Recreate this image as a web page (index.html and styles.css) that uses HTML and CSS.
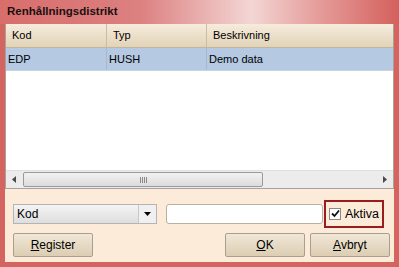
FILE: index.html
```html
<!DOCTYPE html>
<html lang="sv">
  <head>
    <meta charset="UTF-8" />
    <title>Renhållningsdistrikt</title>
    <link rel="stylesheet" href="styles.css">
  </head>
  <body>
    <div class="window">
      <div class="titlebar">Renhållningsdistrikt</div>

      <div class="content">
        <!-- lista -->
        <div class="grid">
          <div class="row head">
            <div class="cell c1">Kod</div>
            <div class="cell c2">Typ</div>
            <div class="cell c3">Beskrivning</div>
          </div>
          <div class="row selected">
            <div class="cell c1">EDP</div>
            <div class="cell c2">HUSH</div>
            <div class="cell c3">Demo data</div>
          </div>
          <div class="empty"></div>
          <div class="hscroll">
            <div class="arrow">
              <svg width="5" height="7" viewBox="0 0 5 7"><path d="M4 0 L0 3.5 L4 7 Z" fill="#4a4a4a"/></svg>
            </div>
            <div class="track">
              <div class="thumb"><span class="grip"></span></div>
            </div>
            <div class="arrow">
              <svg width="5" height="7" viewBox="0 0 5 7"><path d="M1 0 L5 3.5 L1 7 Z" fill="#4a4a4a"/></svg>
            </div>
          </div>
        </div>

        <!-- filter -->
        <div class="filter">
          <div class="combo">
            <span class="combo-text">Kod</span>
            <span class="combo-btn">
              <svg width="7" height="4" viewBox="0 0 7 4"><path d="M0 0 H7 L3.5 4 Z" fill="#000"/></svg>
            </span>
          </div>
          <input type="text" class="search" />
          <label class="check">
            <span class="box">
              <svg width="9" height="9" viewBox="0 0 9 9"><path d="M1 4.5 L3.5 7 L8 1.5" fill="none" stroke="#111" stroke-width="1.8"/></svg>
            </span>
            Aktiva
          </label>
        </div>

        <!-- knappar -->
        <div class="buttons">
          <button class="btn"><u>R</u>egister</button>
          <div class="right">
            <button class="btn"><u>O</u>K</button>
            <button class="btn"><u>A</u>vbryt</button>
          </div>
        </div>
      </div>
    </div>
  </body>
</html>
```

FILE: styles.css
```css
body {
  margin: 0;
  font-family: "Liberation Sans", Arial, sans-serif;
  font-size: 11px;
  color: #000;
}
.window {
  width: 399px;
  height: 267px;
  box-sizing: border-box;
  background-color: #d4645f;
  display: flex;
  flex-direction: column;
}
.titlebar {
  height: 24px;
  line-height: 23px;
  padding-left: 7px;
  font-weight: bold;
  font-size: 11.5px;
  color: #1a1010;
  background: linear-gradient(to right, #d86e6c 0%, #dc8080 35%, #f3d6d4 63%, #e59c9a 80%, #d4605c 100%);
}
.content {
  flex: 1;
  margin: 0 5px 5px 5px;
  background-color: #fcebd8;
  display: flex;
  flex-direction: column;
}
.grid {
  height: 165px;
  box-sizing: border-box;
  border: 1px solid #a8a29a;
  border-top: none;
  background-color: #fff;
  display: flex;
  flex-direction: column;
}
.row {
  display: flex;
  height: 23px;
}
.cell {
  box-sizing: border-box;
  padding-left: 2px;
  line-height: 22px;
  border-right: 1px solid #c6c0b6;
}
.c1 {
  width: 101px;
}
.c2 {
  width: 100px;
}
.c3 {
  flex: 1;
  border-right: none;
}
.head {
  background: linear-gradient(to bottom, #f6ecdc, #e2d3b8);
  border-bottom: 1px solid #c2b59d;
  height: 23px;
}
.head .cell {
  padding-left: 6px;
  border-right-color: #cbbda3;
}
.selected {
  background-color: #b5c9e2;
  border-bottom: 1px solid #c7d4e2;
  height: 22px;
}
.selected .cell {
  border-right-color: #a8b8cc;
}
.empty {
  flex: 1;
}
.hscroll {
  height: 17px;
  display: flex;
  background-color: #ececec;
  border-top: 1px solid #e0e0e0;
}
.arrow {
  width: 17px;
  display: flex;
  align-items: center;
  justify-content: center;
}
.track {
  flex: 1;
  padding: 1px 0;
}
.thumb {
  width: 240px;
  height: 15px;
  box-sizing: border-box;
  border: 1px solid #9a9a9a;
  border-radius: 2px;
  background: linear-gradient(to bottom, #f2f2f2, #dcdcdc);
  display: flex;
  align-items: center;
  justify-content: center;
}
.grip {
  width: 7px;
  height: 6px;
  background: repeating-linear-gradient(to right, #8a8a8a 0 1px, transparent 1px 2px);
}
.filter {
  display: flex;
  align-items: center;
  margin-top: 11px;
  padding-left: 8px;
  height: 27px;
}
.combo {
  width: 144px;
  height: 20px;
  box-sizing: border-box;
  border: 1px solid #b4b4b4;
  background: linear-gradient(to bottom, #f4f4f4, #dedede);
  display: flex;
  align-items: center;
  font-size: 12px;
}
.combo-text {
  flex: 1;
  padding-left: 3px;
}
.combo-btn {
  width: 17px;
  height: 18px;
  border-left: 1px solid #c8c8c8;
  background-color: #f0f0f0;
  display: flex;
  align-items: center;
  justify-content: center;
}
.search {
  margin: 0 0 0 9px;
  width: 157px;
  height: 20px;
  box-sizing: border-box;
  border: 1px solid #b9b0a4;
  border-radius: 3px;
  background-color: #fff;
  outline: none;
}
.check {
  margin-left: 1px;
  width: 60px;
  height: 28px;
  box-sizing: border-box;
  border: 2px solid #9a1c1c;
  display: flex;
  align-items: center;
  gap: 4px;
  padding-left: 3px;
  font-size: 12.5px;
}
.box {
  width: 12px;
  height: 12px;
  box-sizing: border-box;
  border: 1px solid #8a8a8a;
  background-color: #fff;
  display: flex;
  align-items: center;
  justify-content: center;
}
.buttons {
  display: flex;
  justify-content: space-between;
  margin-top: 6px;
  padding: 0 4px 0 8px;
}
.right {
  display: flex;
  gap: 5px;
}
.btn {
  width: 80px;
  height: 24px;
  font-family: "Liberation Sans", Arial, sans-serif;
  font-size: 12px;
  color: #000;
  border: 1px solid #a89f90;
  border-radius: 2px;
  background: linear-gradient(to bottom, #f1e7d7, #dccdb3);
  padding: 0;
}
```
